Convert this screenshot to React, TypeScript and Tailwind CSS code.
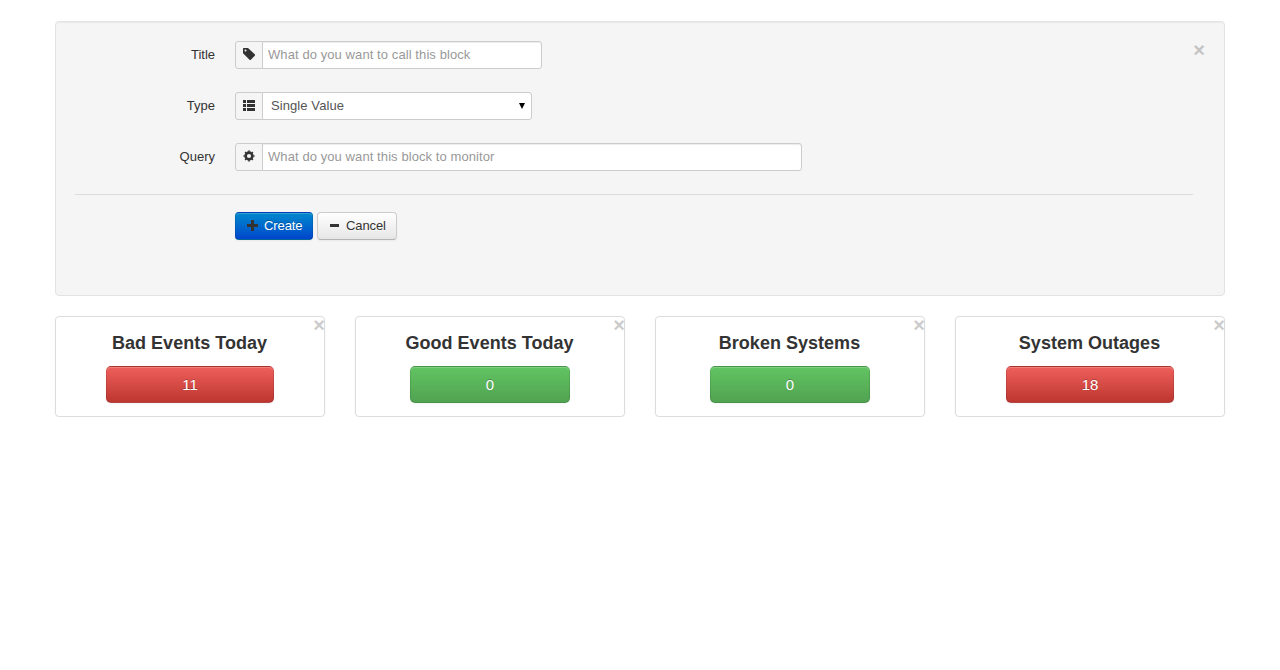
import React from "react";

function TagIcon() {
  return (
    <svg width="14" height="14" viewBox="0 0 14 14" fill="#333">
      <path fillRule="evenodd" d="M1 1.5 1.5 1H6l7 6.6v.8L8.6 13h-.8L1 6.2zM3.5 2.5a1 1 0 1 0 0 2 1 1 0 0 0 0-2z" />
    </svg>
  );
}

function ListIcon() {
  return (
    <svg width="14" height="14" viewBox="0 0 14 14" fill="#333" shapeRendering="crispEdges">
      <path d="M1 2h3v3H1zM5 2h8v3H5zM1 6h3v3H1zM5 6h8v3H5zM1 10h3v3H1zM5 10h8v3H5z" />
    </svg>
  );
}

function CogIcon() {
  return (
    <svg width="14" height="14" viewBox="0 0 14 14" fill="none" stroke="#333">
      <circle cx="7" cy="7" r="3.4" strokeWidth="2.6" />
      <path
        strokeWidth="1.2"
        d="M7 1.2v1.8M7 11v1.8M1.2 7h1.8M11 7h1.8M3 3l1.2 1.2M9.8 9.8 11 11M3 11l1.2-1.2M9.8 4.2 11 3"
      />
    </svg>
  );
}

function PlusIcon() {
  return (
    <svg className="mb-0.5" width="14" height="14" viewBox="0 0 14 14" fill="#333" shapeRendering="crispEdges">
      <path d="M5 2h3v4h4v3H8v4H5V9H1V6h4z" />
    </svg>
  );
}

function MinusIcon() {
  return (
    <svg className="mb-0.5" width="14" height="14" viewBox="0 0 14 14" fill="#333" shapeRendering="crispEdges">
      <path d="M2 6h9v3H2z" />
    </svg>
  );
}

interface RowProps {
  label: string;
  icon: React.ReactNode;
  children: React.ReactNode;
}

function Row({ label, icon, children }: RowProps) {
  return (
    <div className="mb-[23px] flex h-7">
      <label className="mr-5 w-[140px] pt-1 text-right leading-5">{label}</label>
      <span className="flex h-7 w-7 items-start justify-center rounded-l-[3px] border border-[#ccc] bg-[#f5f5f5] pt-[5px]">
        {icon}
      </span>
      {children}
    </div>
  );
}

const inputClass =
  "-ml-px h-7 rounded-r-[3px] border border-[#ccc] bg-white px-[5px] pb-px leading-5 tracking-[0.085px] text-[#555] shadow-[inset_0_1px_1px_rgba(0,0,0,0.075)] outline-none placeholder:text-[#999]";

interface CardProps {
  title: string;
  value: number;
}

function Card({ title, value }: CardProps) {
  const tone =
    value > 0
      ? "w-[168px] from-[#ee5f5b] to-[#bd362f]"
      : "w-40 from-[#62c462] to-[#51a351]";
  return (
    <div className="relative flex h-[101px] w-[270px] flex-col items-center rounded border border-[#ddd] pt-[10px] shadow-[0_1px_3px_rgba(0,0,0,0.055)]">
      <button className="absolute -top-px -right-px text-[20px] leading-[18px] font-bold text-black opacity-20 [text-shadow:0_1px_0_#fff]">×</button>
      <h3 className="mr-px h-[39px] text-[18px] leading-8 font-bold tracking-[0.02px]">{title}</h3>
      <button
        className={
          "h-[37px] rounded-[5px] border border-t-black/10 border-r-black/10 border-b-black/25 border-l-black/10 bg-linear-to-b text-[15px] text-white shadow-[inset_0_1px_0_rgba(255,255,255,0.2),0_1px_2px_rgba(0,0,0,0.05)] [text-shadow:0_-1px_0_rgba(0,0,0,0.25)] " +
          tone
        }
      >
        {value}
      </button>
    </div>
  );
}

export default function App() {
  return (
    <main className="mx-auto w-[1170px] pt-[21px] font-['Liberation_Sans',Arial,sans-serif] text-[13px] leading-5 text-[#333]">
      <section className="relative mb-5 h-[275px] rounded border border-[#e3e3e3] bg-[#f5f5f5] px-[19px] pt-[19px] shadow-[inset_0_1px_1px_rgba(0,0,0,0.05)]">
        <button className="absolute top-[19px] right-[19px] text-[20px] leading-[18px] font-bold text-black opacity-20 [text-shadow:0_1px_0_#fff]">×</button>
        <Row label="Title" icon={<TagIcon />}>
          <input className={inputClass + " w-[280px]"} placeholder="What do you want to call this block" />
        </Row>
        <Row label="Type" icon={<ListIcon />}>
          <div className="-ml-px flex h-7 w-[270px] items-center justify-between rounded-r-[3px] border border-[#ccc] bg-white pr-[6px] pl-2 tracking-[0.085px] text-[#555]">
            <span className="pb-px">Single Value</span>
            <svg width="6" height="6" viewBox="0 0 6 6">
              <path d="M0 0h6L3 6z" />
            </svg>
          </div>
        </Row>
        <Row label="Query" icon={<CogIcon />}>
          <input className={inputClass + " w-[540px]"} placeholder="What do you want this block to monitor" />
        </Row>
        <div className="flex w-[1118px] gap-1 border-t border-[#ddd] pt-[17px] pl-40">
          <button className="flex h-7 w-[78px] items-center rounded border border-t-black/10 border-r-black/10 border-b-black/25 border-l-black/10 bg-linear-to-b from-[#0088cc] to-[#0044cc] pl-[10px] text-white shadow-[inset_0_1px_0_rgba(255,255,255,0.2),0_1px_2px_rgba(0,0,0,0.05)] [text-shadow:0_-1px_0_rgba(0,0,0,0.25)]">
            <PlusIcon />
            <span className="ml-1 tracking-[-0.1px]">Create</span>
          </button>
          <button className="flex h-7 w-20 items-center rounded border border-[#ccc] border-b-[#b3b3b3] bg-linear-to-b from-white to-[#e6e6e6] pl-[10px] shadow-[inset_0_1px_0_rgba(255,255,255,0.2),0_1px_2px_rgba(0,0,0,0.05)] [text-shadow:0_1px_1px_rgba(255,255,255,0.75)]">
            <MinusIcon />
            <span className="ml-1 tracking-[-0.1px]">Cancel</span>
          </button>
        </div>
      </section>
      <section className="flex gap-[30px]">
        <Card title="Bad Events Today" value={11} />
        <Card title="Good Events Today" value={0} />
        <Card title="Broken Systems" value={0} />
        <Card title="System Outages" value={18} />
      </section>
    </main>
  );
}
